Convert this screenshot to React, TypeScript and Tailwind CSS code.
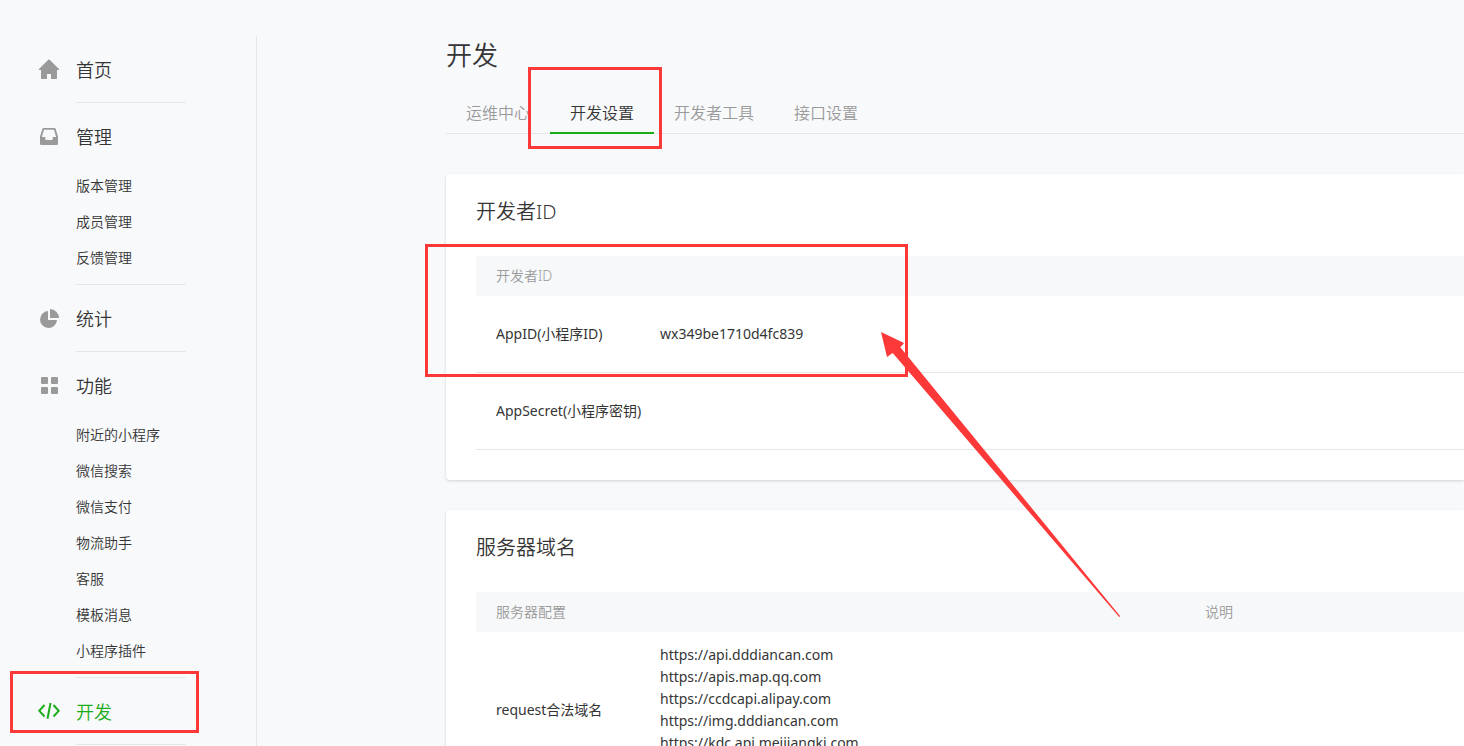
import type { ReactNode } from "react";

type MenuGroup = {
  label: string;
  icon: ReactNode;
  items?: string[];
  active?: boolean;
};

const HomeIcon = () => (
  <svg width="24" height="24" viewBox="0 0 24 24" fill="currentColor" aria-hidden="true">
    <path d="M12 1.500a1 1 0 0 1 .7.3l9.300 9.200c.4.4.2.9-.3.9H20v8.200a.9.9 0 0 1-.9.9H14v-5h-4v5H4.900a.9.9 0 0 1-.9-.9v-8.200H2.300c-.5 0-.7-.5-.3-.9l9.300-9.200a1 1 0 0 1 .7-.3z" />
  </svg>
);

const InboxIcon = () => (
  <svg width="24" height="24" viewBox="0 0 24 24" fill="currentColor" aria-hidden="true">
    <path
      fillRule="evenodd"
      d="M6.300 3h11.400c.5 0 .8.300.9.700L21 11.500v7.400a1.100 1.100 0 0 1-1.100 1.100H4.100A1.100 1.100 0 0 1 3 18.900v-7.400l2.400-7.800c.1-.4.4-.7.900-.7zM7 4.700L4.900 12H8.300v2.200c0 .5.300.8.800.8h5.800c.5 0 .8-.3.8-.8V12h3.400L17 4.700z"
    />
  </svg>
);

const ChartIcon = () => (
  <svg width="24" height="24" viewBox="0 0 24 24" fill="currentColor" aria-hidden="true">
    <path d="M11 4v9h9a8.500 8.500 0 1 1-9-9z" />
    <path d="M13 2a9 9 0 0 1 9 9h-9z" />
  </svg>
);

const GridIcon = () => (
  <svg width="24" height="24" viewBox="0 0 24 24" fill="currentColor" aria-hidden="true">
    <rect x="4" y="3" width="7" height="7" rx="1" />
    <rect x="14" y="3" width="7" height="7" rx="1" />
    <rect x="4" y="13" width="7" height="7" rx="1" />
    <rect x="14" y="13" width="7" height="7" rx="1" />
  </svg>
);

const CodeIcon = () => (
  <svg
    width="24"
    height="24"
    viewBox="0 0 24 24"
    fill="none"
    stroke="currentColor"
    strokeWidth="2"
    aria-hidden="true"
  >
    <path d="M7.500 5L2.300 10.800l5.200 5.700M16.500 5l5.200 5.800-5.200 5.700M13.500 3l-3 15.700" />
  </svg>
);

const menu: MenuGroup[] = [
  { label: "首页", icon: <HomeIcon /> },
  { label: "管理", icon: <InboxIcon />, items: ["版本管理", "成员管理", "反馈管理"] },
  { label: "统计", icon: <ChartIcon /> },
  {
    label: "功能",
    icon: <GridIcon />,
    items: [
      "附近的小程序",
      "微信搜索",
      "微信支付",
      "物流助手",
      "客服",
      "模板消息",
      "小程序插件",
    ],
  },
  { label: "开发", icon: <CodeIcon />, active: true },
];

const tabs = ["运维中心", "开发设置", "开发者工具", "接口设置"];

const domains = [
  "https://api.dddiancan.com",
  "https://apis.map.qq.com",
  "https://ccdcapi.alipay.com",
  "https://img.dddiancan.com",
  "https://kdc.api.meijiangki.com",
];

function Sidebar() {
  return (
    <nav className="w-[257px] shrink-0 border-r border-[#e4e6e8] pl-[37px]">
      {menu.map((group) => {
        const height = group.items ? "h-[65px]" : "h-[66px]";
        return (
          <div key={group.label} className="flex gap-[15px]">
            <span
              className={`flex items-center pt-0.5 ${height} ${
                group.active ? "text-[#1aad19]" : "text-[#9a9a9a]"
              }`}
            >
              {group.icon}
            </span>
            <div className="w-[110px] border-b border-[#e4e6e8]">
              <a
                href="#"
                className={`flex items-center pt-0.5 text-lg ${height} ${
                  group.active ? "text-[#1aad19]" : ""
                }`}
              >
                {group.label}
              </a>
              {group.items && (
                <ul className="pb-2">
                  {group.items.map((item) => (
                    <li key={item}>
                      <a href="#" className="block text-sm leading-9">
                        {item}
                      </a>
                    </li>
                  ))}
                </ul>
              )}
            </div>
          </div>
        );
      })}
    </nav>
  );
}

function Card({ title, children }: { title: string; children: ReactNode }) {
  return (
    <section className="rounded-l bg-white pb-[30px] pl-[30px] shadow-[0_1px_3px_rgba(0,0,0,0.16)]">
      <h3 className="flex h-[82px] items-center pb-1.5 text-xl">{title}</h3>
      {children}
    </section>
  );
}

export default function App() {
  return (
    <div className="relative flex h-screen overflow-hidden bg-[#f8f9fb] pt-9 font-['Noto_Sans','Noto_Sans_CJK_SC',sans-serif] font-[350] text-[#353535]">
      <Sidebar />

      <main className="ml-[189px] min-w-0 flex-1">
        <h2 className="text-[26px] leading-[38px]">开发</h2>
        <div role="tablist" className="mt-[18px] flex border-b border-[#e4e6e8]">
          {tabs.map((tab) => (
            <button
              key={tab}
              type="button"
              role="tab"
              aria-selected={tab === "开发设置"}
              className={`-mb-px h-[42px] border-b-2 px-5 pt-0.5 text-base ${
                tab === "开发设置"
                  ? "border-[#1aad19]"
                  : "border-transparent text-[#9a9a9a]"
              }`}
            >
              {tab}
            </button>
          ))}
        </div>

        <div className="mt-10 flex flex-col gap-[30px]">
          <Card title="开发者ID">
            <table className="w-full table-fixed border-separate border-spacing-0 text-left text-sm">
              <colgroup>
                <col className="w-[164px]" />
                <col />
              </colgroup>
              <thead>
                <tr className="h-10 bg-[#f6f8f9] text-[#9a9a9a]">
                  <th colSpan={2} className="px-5 font-[350]">
                    开发者ID
                  </th>
                </tr>
              </thead>
              <tbody className="font-normal [&_td]:border-b [&_td]:border-[#e4e6e8]">
                <tr className="h-[77px]">
                  <td className="pl-5 whitespace-nowrap">AppID(小程序ID)</td>
                  <td className="px-5">wx349be1710d4fc839</td>
                </tr>
                <tr className="h-[77px]">
                  <td className="pl-5 whitespace-nowrap">AppSecret(小程序密钥)</td>
                  <td />
                </tr>
              </tbody>
            </table>
          </Card>

          <Card title="服务器域名">
            <table className="w-full table-fixed border-separate border-spacing-0 text-left text-sm">
              <colgroup>
                <col className="w-[164px]" />
                <col className="w-[545px]" />
                <col />
              </colgroup>
              <thead>
                <tr className="h-10 bg-[#f6f8f9] text-[#9a9a9a]">
                  <th colSpan={2} className="px-5 font-[350]">
                    服务器配置
                  </th>
                  <th className="px-5 font-[350]">说明</th>
                </tr>
              </thead>
              <tbody className="font-normal [&_td]:border-b [&_td]:border-[#e4e6e8]">
                <tr className="h-[157px]">
                  <td className="pl-5 whitespace-nowrap">request合法域名</td>
                  <td className="px-5 pt-3 align-top">
                    {domains.map((domain) => (
                      <p key={domain} className="leading-[22px]">
                        {domain}
                      </p>
                    ))}
                  </td>
                  <td />
                </tr>
              </tbody>
            </table>
          </Card>
        </div>
      </main>

      {/* Red marks over the page */}
      <div className="pointer-events-none absolute top-[671px] left-[10px] h-[62px] w-[189px] border-3 border-[#fd3838]" />
      <div className="pointer-events-none absolute top-[67px] left-[528px] h-[82px] w-[134px] border-3 border-[#fd3838]" />
      <div className="pointer-events-none absolute top-[244px] left-[425px] h-[133px] w-[483px] border-3 border-[#fd3838]" />
      <svg
        className="pointer-events-none absolute top-[332px] left-[881px]"
        width="240"
        height="286"
        viewBox="0 0 240 286"
        fill="#fd3838"
        aria-hidden="true"
      >
        <path d="M0 0L23 11L19.300 15.300L239.200 284.300L238.200 285L11.700 21L6 25Z" />
      </svg>
    </div>
  );
}
